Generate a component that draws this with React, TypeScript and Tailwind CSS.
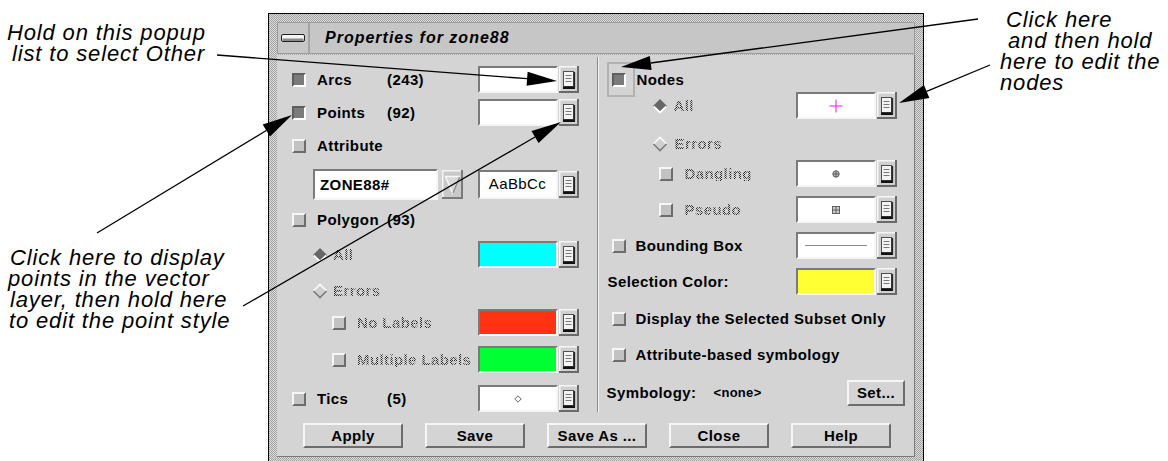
import React from "react";

const STIPPLE =
  "bg-[repeating-conic-gradient(#a2a2a2_0_25%,#dcdcdc_0_50%)] bg-[length:2px_2px]";
const DIS =
  "bg-[repeating-conic-gradient(#2a2a2a_0_25%,transparent_0_50%)] bg-[length:2px_2px] bg-clip-text text-transparent";
const LBL = "font-bold text-[15px] tracking-[0.4px] leading-none whitespace-nowrap";
const RAISED =
  "border-2 border-t-[#f6f6f6] border-l-[#f6f6f6] border-b-[#6c6c6c] border-r-[#6c6c6c]";
const SUNKEN =
  "border-2 border-t-[#7a7a7a] border-l-[#7a7a7a] border-b-[#f6f6f6] border-r-[#f6f6f6]";

function Check({ on = false }: { on?: boolean }) {
  return on ? (
    <span className="block shrink-0 w-[14px] h-[14px] bg-[#7b7b7b] border-2 border-t-[#5e5e5e] border-l-[#5e5e5e] border-b-white border-r-white" />
  ) : (
    <span className={"block shrink-0 w-[14px] h-[14px] bg-[#c2c2c2] " + RAISED} />
  );
}

function Diamond({ on = false }: { on?: boolean }) {
  return (
    <svg width="16" height="16" viewBox="0 0 16 16" className="block shrink-0">
      {on ? (
        <>
          <polygon points="8,1 15,8 8,15 1,8" fill="#666" />
          <polyline points="1.8,8.5 8,14.5 14.2,8.5" fill="none" stroke="#fff" strokeWidth="1.8" />
        </>
      ) : (
        <>
          <polygon points="8,1 15,8 8,15 1,8" fill="#cfcfcf" />
          <polyline points="1.5,8 8,1.5 14.5,8" fill="none" stroke="#fafafa" strokeWidth="1.6" />
          <polyline points="1.5,8 8,14.5 14.5,8" fill="none" stroke="#7c7c7c" strokeWidth="1.6" />
        </>
      )}
    </svg>
  );
}

function MenuBtn() {
  return (
    <svg width="20" height="27" viewBox="0 0 20 27" className="block shrink-0">
      <rect width="20" height="27" fill="#d0d0d0" />
      <path d="M0 0H20V1.5H1.5V27H0Z" fill="#f6f6f6" />
      <path d="M20 0V27H0V25H18V0Z" fill="#6a6a6a" />
      <rect x="4.5" y="5.5" width="10" height="15" fill="#f3f3f3" stroke="#505050" strokeWidth="1" />
      <line x1="6.5" y1="9.5" x2="12.5" y2="9.5" stroke="#7a7a7a" />
      <line x1="6.5" y1="12.5" x2="12.5" y2="12.5" stroke="#7a7a7a" />
      <line x1="6.5" y1="15.5" x2="12.5" y2="15.5" stroke="#7a7a7a" />
      <rect x="4" y="20.5" width="12" height="2.5" fill="#111" />
      <rect x="14.5" y="6" width="1.6" height="16" fill="#222" />
    </svg>
  );
}

function Field({
  children,
  color = "bg-white",
}: {
  children?: React.ReactNode;
  color?: string;
}) {
  return (
    <div className={"w-[80px] h-[27px] flex items-center justify-center " + SUNKEN + " " + color}>
      {children}
    </div>
  );
}

function Group({
  children,
  color,
}: {
  children?: React.ReactNode;
  color?: string;
}) {
  return (
    <div className="ml-auto flex gap-[1px]">
      <Field color={color}>{children}</Field>
      <MenuBtn />
    </div>
  );
}

function Btn({ children, w = "w-[100px]" }: { children: React.ReactNode; w?: string }) {
  return (
    <div
      className={
        "h-[25px] flex items-center justify-center bg-[#d4d4d4] " + RAISED + " " + w + " " + LBL
      }
    >
      {children}
    </div>
  );
}

function Arrow({
  x1,
  y1,
  x2,
  y2,
  len = 30,
  hw = 7,
}: {
  x1: number;
  y1: number;
  x2: number;
  y2: number;
  len?: number;
  hw?: number;
}) {
  const dx = x2 - x1;
  const dy = y2 - y1;
  const d = Math.hypot(dx, dy);
  const ux = dx / d;
  const uy = dy / d;
  const bx = x2 - ux * len;
  const by = y2 - uy * len;
  const px = -uy * hw;
  const py = ux * hw;
  return (
    <g>
      <line x1={x1} y1={y1} x2={bx} y2={by} stroke="#000" strokeWidth="1.3" />
      <polygon
        points={`${x2},${y2} ${bx + px},${by + py} ${bx - px},${by - py}`}
        fill="#000"
      />
    </g>
  );
}

const ANN = "italic text-[22px] leading-[21px] tracking-[0.85px] whitespace-nowrap";

export default function App() {
  return (
    <div className="relative w-[1168px] h-[461px] overflow-hidden bg-white text-black font-['Liberation_Sans',Arial,sans-serif]">
      {/* Window */}
      <div
        className={
          "ml-[268px] mt-[13px] w-[656px] h-[470px] border border-black pt-[8px] pl-[8px] pr-[8px] " +
          STIPPLE
        }
      >
        {/* Title bar */}
        <div className="flex h-[32px] bg-[#c6c6c6] border border-[#9c9c9c]">
          <div className="w-[32px] flex items-center justify-center border-r-2 border-r-[#a4a4a4]">
            <svg width="24" height="8" viewBox="0 0 24 8" className="block">
              <rect x="0.5" y="0.5" width="23" height="7" rx="1.5" fill="#f4f4f4" stroke="#222" />
              <rect x="1.5" y="4.5" width="21" height="2.5" fill="#8a8a8a" />
            </svg>
          </div>
          <div className="flex items-center pl-[15px] italic font-bold text-[16px] tracking-[1px] whitespace-nowrap">
            Properties for zone88
          </div>
        </div>

        {/* Content */}
        <div className="mt-[1px] h-[402px] bg-[#d4d4d4] border-b border-r border-[#7a7a7a] flex flex-col">
          <div className="flex h-[357px]">
            {/* Left panel */}
            <div className="w-[320px] pt-[11px] pl-[15px] pr-[18px] flex flex-col">
              <div className="flex items-center h-[27px]">
                <Check on />
                <span className={"ml-[11px] w-[70px] " + LBL}>Arcs</span>
                <span className={LBL}>(243)</span>
                <Group />
              </div>
              <div className="flex items-center h-[27px] mt-[6px]">
                <Check on />
                <span className={"ml-[11px] w-[70px] " + LBL}>Points</span>
                <span className={LBL}>(92)</span>
                <Group />
              </div>
              <div className="flex items-center h-[27px] mt-[6px]">
                <Check />
                <span className={"ml-[11px] " + LBL}>Attribute</span>
              </div>
              <div className="flex items-center h-[31px] mt-[10px]">
                <div
                  className={
                    "ml-[21px] w-[125px] h-[31px] bg-white flex items-center pl-[5px] " +
                    SUNKEN +
                    " " +
                    LBL
                  }
                >
                  ZONE88#
                </div>
                <svg width="21" height="29" viewBox="0 0 21 29" className="block shrink-0 ml-[4px]">
                  <rect width="21" height="29" fill="#c9c9c9" />
                  <path d="M0 0H21V1.5H1.5V29H0Z" fill="#f4f4f4" />
                  <path d="M21 0V29H0V27H19V0Z" fill="#7a7a7a" />
                  <polygon points="3.5,6.5 17.5,6.5 10.5,23" fill="#d8d8d8" stroke="#f8f8f8" strokeWidth="1.4" />
                  <line x1="17.5" y1="7" x2="11" y2="23" stroke="#8a8a8a" strokeWidth="1.4" />
                </svg>
                <div className="ml-auto flex gap-[1px] items-center">
                  <div
                    className={
                      "w-[80px] h-[29px] bg-white flex items-center justify-center text-[15px] tracking-[0.4px] " +
                      SUNKEN
                    }
                  >
                    AaBbCc
                  </div>
                  <MenuBtn />
                </div>
              </div>
              <div className="flex items-center h-[27px] mt-[6px]">
                <Check />
                <span className={"ml-[11px] w-[70px] " + LBL}>Polygon</span>
                <span className={LBL}>(93)</span>
              </div>
              <div className="flex items-center h-[27px] mt-[8px]">
                <span className="ml-[20px]">
                  <Diamond on />
                </span>
                <span className={"ml-[5px] " + LBL + " " + DIS}>All</span>
                <Group color="bg-[#00ffff]" />
              </div>
              <div className="flex items-center h-[27px] mt-[9px]">
                <span className="ml-[20px]">
                  <Diamond />
                </span>
                <span className={"ml-[5px] " + LBL + " " + DIS}>Errors</span>
              </div>
              <div className="flex items-center h-[27px] mt-[5px]">
                <span className="ml-[40px]">
                  <Check />
                </span>
                <span className={"ml-[11px] " + LBL + " " + DIS}>No Labels</span>
                <Group color="bg-[#ff3311]" />
              </div>
              <div className="flex items-center h-[27px] mt-[10px]">
                <span className="ml-[40px]">
                  <Check />
                </span>
                <span className={"ml-[11px] " + LBL + " " + DIS}>Multiple Labels</span>
                <Group color="bg-[#00ff33]" />
              </div>
              <div className="flex items-center h-[27px] mt-[12px]">
                <Check />
                <span className={"ml-[11px] w-[70px] " + LBL}>Tics</span>
                <span className={LBL}>(5)</span>
                <Group>
                  <svg width="8" height="8" viewBox="0 0 8 8" className="block">
                    <polygon points="4,0.8 7.2,4 4,7.2 0.8,4" fill="none" stroke="#666" strokeWidth="1" />
                  </svg>
                </Group>
              </div>
            </div>

            {/* Separator */}
            <div className="mt-[2px] w-[2px] flex">
              <div className="w-[1px] bg-[#8a8a8a]" />
              <div className="w-[1px] bg-[#f4f4f4]" />
            </div>

            {/* Right panel */}
            <div className="w-[316px] pt-[7px] pl-[8px] pr-[17px] flex flex-col">
              <div className="flex items-start h-[30px]">
                <div className="w-[28px] h-[35px] border-2 border-[#b2b2b2] flex items-center pl-[3px] shrink-0">
                  <Check on />
                </div>
                <span className={"ml-[2px] leading-[35px] font-bold text-[15px] tracking-[0.4px]"}>Nodes</span>
              </div>
              <div className="flex items-center h-[27px]">
                <span className="ml-[45px]">
                  <Diamond on />
                </span>
                <span className={"ml-[6px] " + LBL + " " + DIS}>All</span>
                <Group>
                  <svg width="14" height="14" viewBox="0 0 14 14" className="block">
                    <line x1="0.5" y1="7" x2="13.5" y2="7" stroke="#ff33ff" strokeWidth="1.2" />
                    <line x1="7" y1="0.5" x2="7" y2="13.5" stroke="#ff33ff" strokeWidth="1.2" />
                  </svg>
                </Group>
              </div>
              <div className="flex items-center h-[27px] mt-[11px]">
                <span className="ml-[45px]">
                  <Diamond />
                </span>
                <span className={"ml-[7px] " + LBL + " " + DIS}>Errors</span>
              </div>
              <div className="flex items-center h-[27px] mt-[3px]">
                <span className="ml-[52px]">
                  <Check />
                </span>
                <span className={"ml-[12px] " + LBL + " " + DIS}>Dangling</span>
                <Group>
                  <svg width="8" height="8" viewBox="0 0 8 8" className="block">
                    <circle cx="4" cy="4" r="3.2" fill="#bbb" stroke="#555" strokeWidth="0.9" />
                    <line x1="4" y1="0.8" x2="4" y2="7.2" stroke="#555" strokeWidth="0.9" />
                    <line x1="0.8" y1="4" x2="7.2" y2="4" stroke="#555" strokeWidth="0.9" />
                  </svg>
                </Group>
              </div>
              <div className="flex items-center h-[27px] mt-[9px]">
                <span className="ml-[52px]">
                  <Check />
                </span>
                <span className={"ml-[12px] " + LBL + " " + DIS}>Pseudo</span>
                <Group>
                  <svg width="8" height="8" viewBox="0 0 8 8" className="block">
                    <rect x="0.5" y="0.5" width="7" height="7" fill="#ccc" stroke="#555" strokeWidth="0.9" />
                    <line x1="4" y1="0.5" x2="4" y2="7.5" stroke="#555" strokeWidth="0.9" />
                    <line x1="0.5" y1="4" x2="7.5" y2="4" stroke="#555" strokeWidth="0.9" />
                  </svg>
                </Group>
              </div>
              <div className="flex items-center h-[27px] mt-[9px]">
                <span className="ml-[5px]">
                  <Check />
                </span>
                <span className={"ml-[10px] " + LBL}>Bounding Box</span>
                <Group>
                  <div className="w-[62px] h-[1px] bg-[#8a8a8a]" />
                </Group>
              </div>
              <div className="flex items-center h-[27px] mt-[9px]">
                <span className={"ml-[1px] " + LBL}>Selection Color:</span>
                <Group color="bg-[#ffff33]" />
              </div>
              <div className="flex items-center h-[27px] mt-[10px]">
                <span className="ml-[5px]">
                  <Check />
                </span>
                <span className={"ml-[10px] " + LBL}>Display the Selected Subset Only</span>
              </div>
              <div className="flex items-center h-[27px] mt-[9px]">
                <span className="ml-[5px]">
                  <Check />
                </span>
                <span className={"ml-[10px] " + LBL}>Attribute-based symbology</span>
              </div>
              <div className="flex items-center h-[27px] mt-[11px]">
                <span className={"w-[107px] " + LBL}>Symbology:</span>
                <span className="font-bold text-[13px] tracking-[0.3px] leading-none">&lt;none&gt;</span>
                <div
                  className={
                    "ml-auto -mr-[8px] w-[58px] h-[26px] flex items-center justify-center bg-[#d4d4d4] " +
                    RAISED +
                    " " +
                    LBL
                  }
                >
                  Set...
                </div>
              </div>
            </div>
          </div>

          {/* Buttons */}
          <div className="mt-[11px] flex gap-[22px] pl-[26px]">
            <Btn>Apply</Btn>
            <Btn>Save</Btn>
            <Btn>Save As ...</Btn>
            <Btn>Close</Btn>
            <Btn>Help</Btn>
          </div>
        </div>
      </div>

      {/* Annotations */}
      <div className={"absolute left-0 top-[22px] " + ANN}>
        <div className="pl-[7px]">Hold on this popup</div>
        <div className="pl-[12px]">list to select Other</div>
      </div>
      <div className={"absolute left-0 top-[247px] " + ANN}>
        <div className="pl-[10px]">Click here to display</div>
        <div className="pl-[8px]">points in the vector</div>
        <div className="pl-[10px]">layer, then hold here</div>
        <div className="pl-[9px]">to edit the point style</div>
      </div>
      <div className={"absolute left-[1000px] top-[9px] " + ANN}>
        <div className="pl-[6px]">Click here</div>
        <div className="pl-[8px]">and then hold</div>
        <div>here to edit the</div>
        <div>nodes</div>
      </div>

      {/* Callout arrows */}
      <svg
        className="absolute left-0 top-0 pointer-events-none"
        width="1168"
        height="461"
        viewBox="0 0 1168 461"
      >
        <Arrow x1={217} y1={55} x2={557} y2={81} />
        <Arrow x1={97} y1={233} x2={292} y2={115} />
        <Arrow x1={243} y1={306} x2={561} y2={122} />
        <Arrow x1={978} y1={19} x2={621} y2={67} />
        <Arrow x1={990} y1={65} x2={899} y2={103} />
      </svg>
    </div>
  );
}
